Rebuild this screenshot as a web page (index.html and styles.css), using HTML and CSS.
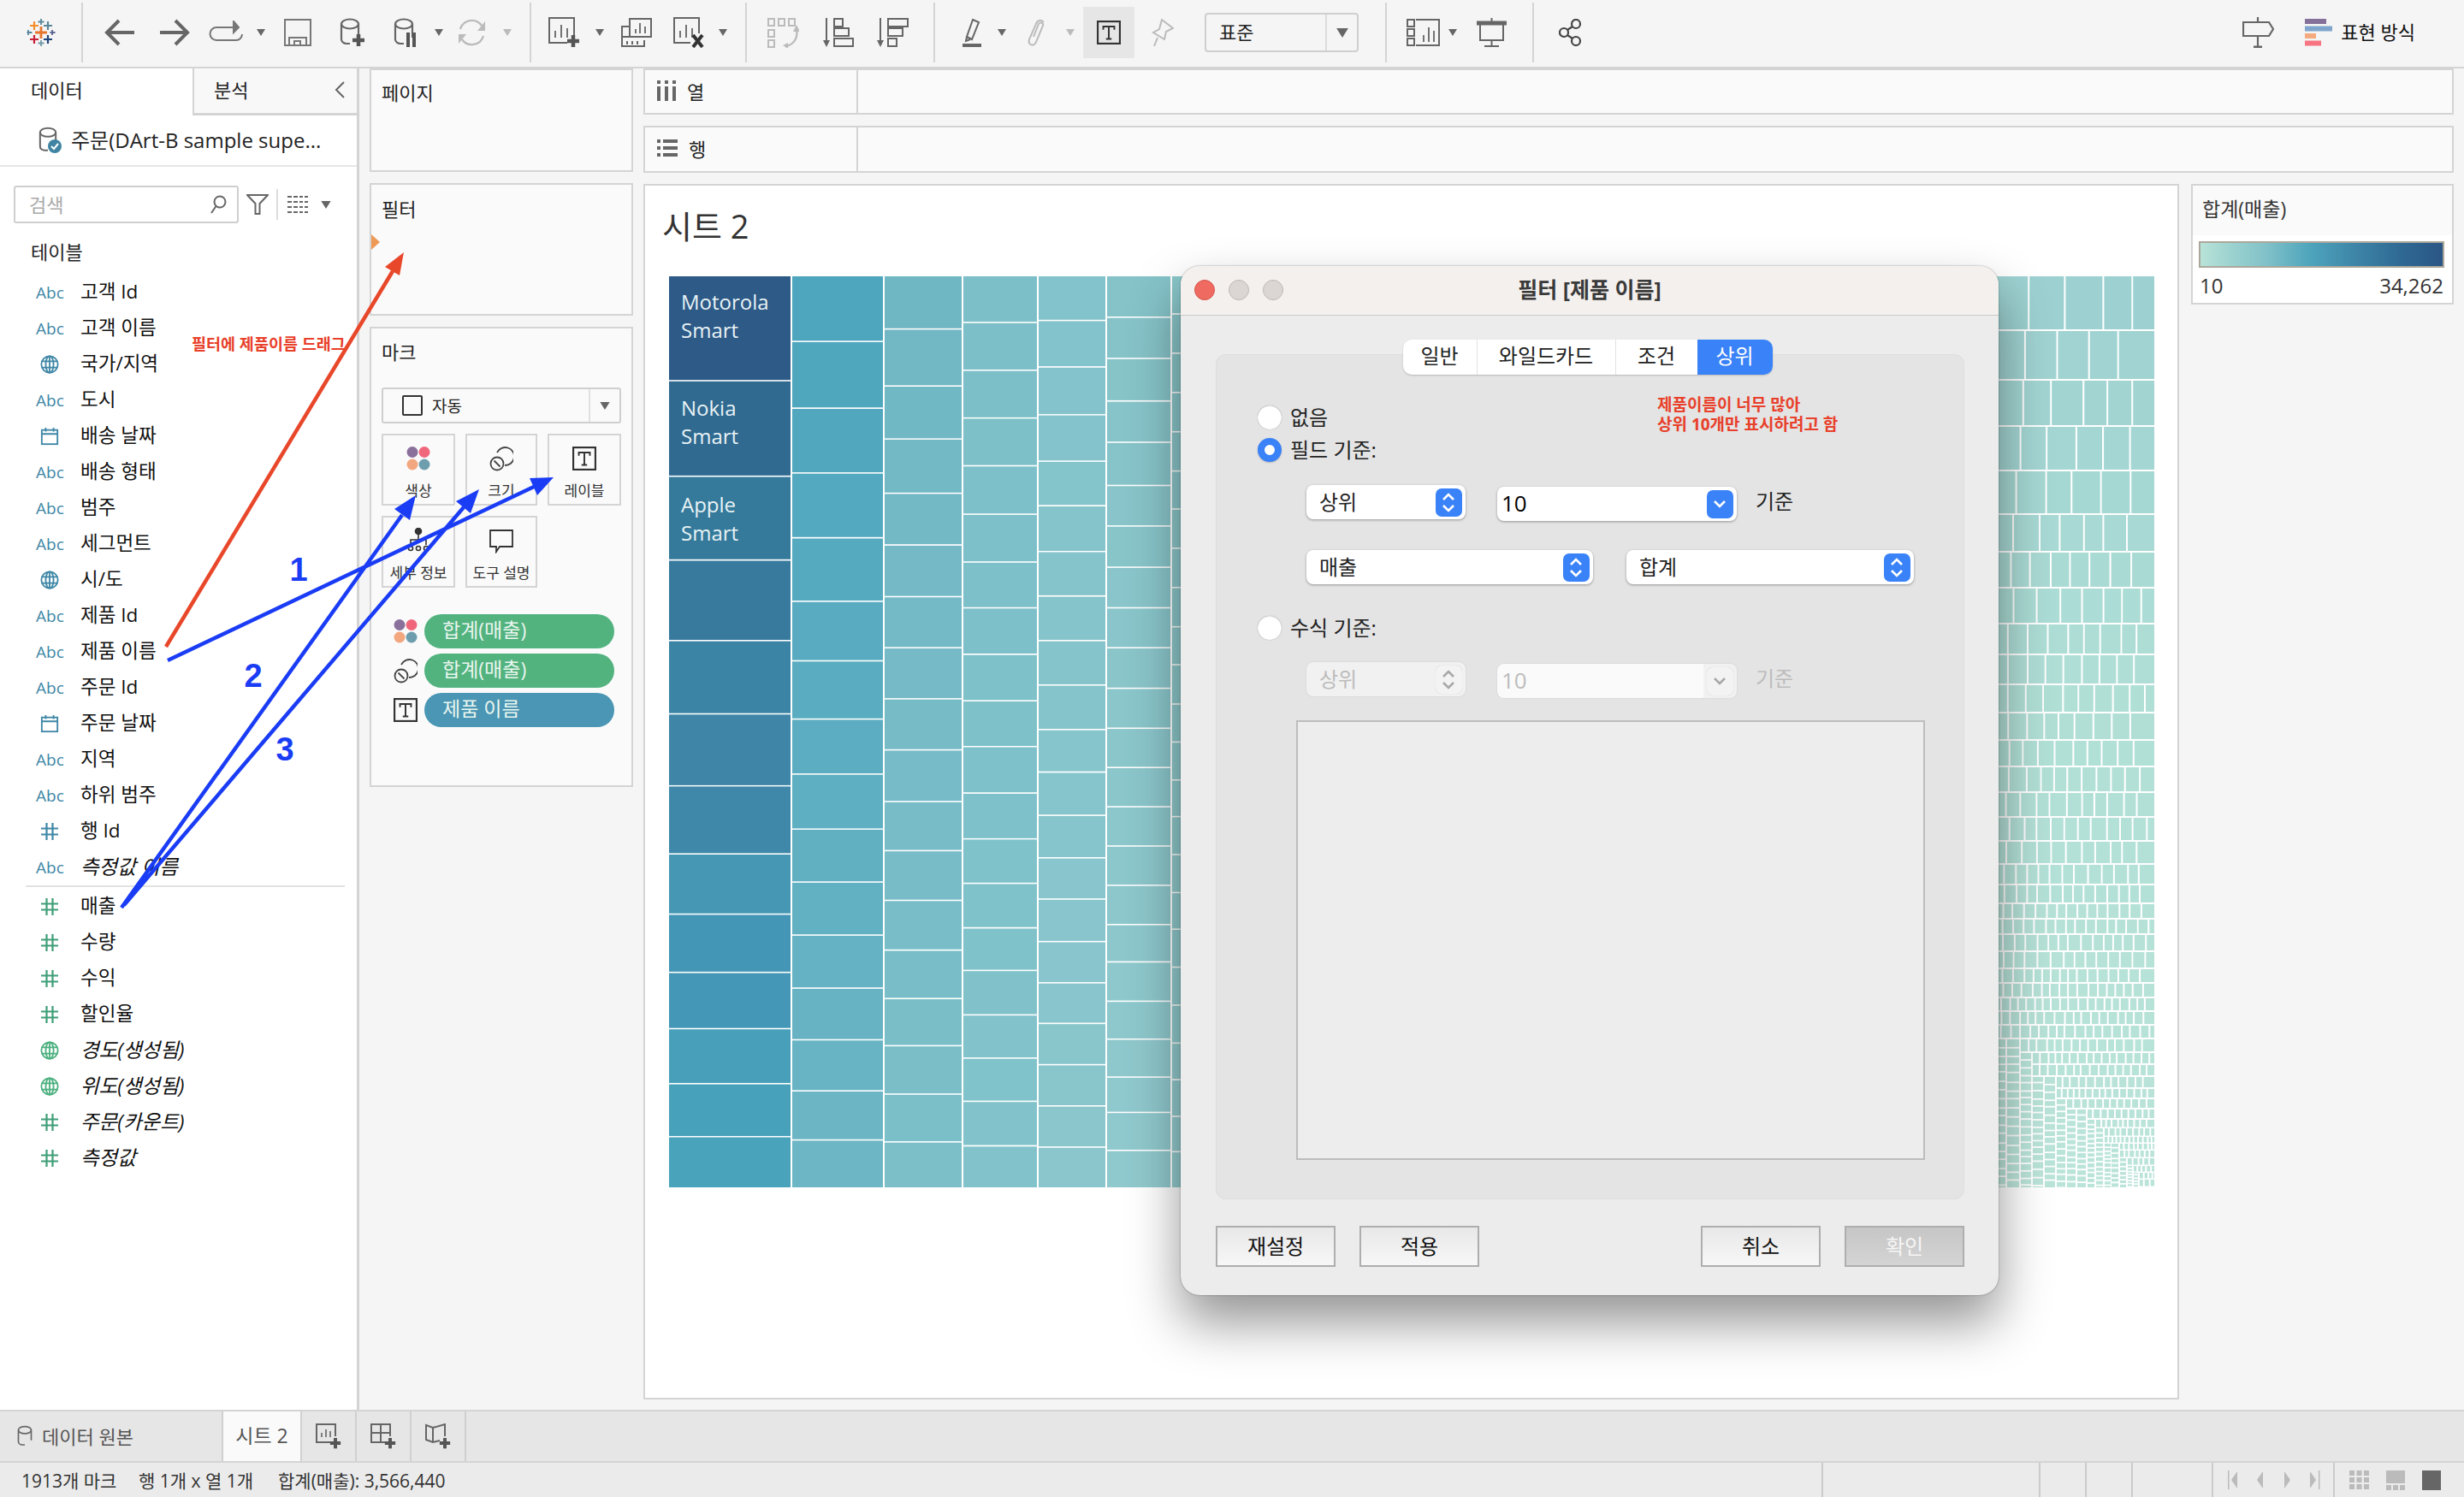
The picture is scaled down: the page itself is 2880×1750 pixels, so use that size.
FILE: index.html
```html
<!DOCTYPE html>
<html lang="ko">
<head>
<meta charset="utf-8">
<title>필터 [제품 이름]</title>
<link rel="stylesheet" href="styles.css">
</head>
<body>
<svg class="sprite" aria-hidden="true">
  <symbol id="s-hash" viewBox="0 0 22 22"><path d="M7.500 1v20M14.500 1v20M1 7.500h20M1 14.500h20" fill="none" stroke="currentColor" stroke-width="2.200"/></symbol>
  <symbol id="s-globe" viewBox="0 0 24 24"><g fill="none" stroke="currentColor" stroke-width="2"><circle cx="12" cy="12" r="10.500"/><ellipse cx="12" cy="12" rx="5" ry="10.500"/><path d="M2 8h20M2 16h20M12 1.500v21"/></g></symbol>
  <symbol id="s-cal" viewBox="0 0 24 24"><g fill="none" stroke="currentColor" stroke-width="2"><rect x="2" y="4" width="20" height="18"/><path d="M2 9h20M7 1v5M17 1v5"/></g></symbol>
  <symbol id="s-dots" viewBox="0 0 28 30"><circle cx="7" cy="7.500" r="6.500" fill="#8a719b"/><circle cx="21" cy="7.500" r="6.500" fill="#f0677b"/><circle cx="7" cy="22" r="6.500" fill="#f2a77f"/><circle cx="21" cy="22" r="6.500" fill="#6e9eae"/></symbol>
  <symbol id="s-size" viewBox="0 0 28 30"><g fill="none" stroke="#444" stroke-width="1.800"><path d="M9 8a10.500 10.500 0 1 1 9 15"/><circle cx="9" cy="21" r="7.500"/><path d="M5.500 17.500l7 7"/></g></symbol>
  <symbol id="s-t" viewBox="0 0 26 26"><rect x="1" y="1" width="24" height="24" fill="none" stroke="#333" stroke-width="2"/><path d="M7 10V6.500h12V10M13 6.500V20M10 20h6" fill="none" stroke="#333" stroke-width="1.800"/></symbol>
  <symbol id="s-caret" viewBox="0 0 10 8"><path d="M0 0h10L5 8z" fill="currentColor"/></symbol>
  <symbol id="s-db" viewBox="0 0 24 32"><g fill="none" stroke="currentColor" stroke-width="2.200"><ellipse cx="12" cy="7" rx="10" ry="5.500"/><path d="M2 7v18c0 3 3 5 6 5h4M22 7v16"/></g></symbol>
  <symbol id="s-plus" viewBox="0 0 16 16"><path d="M8 1v14M1 8h14" stroke="#555" stroke-width="4.500" fill="none"/></symbol>
  <symbol id="s-ud" viewBox="0 0 32 34"><path d="M10 14l6-6 6 6M10 21l6 6 6-6" fill="none" stroke="currentColor" stroke-width="2.600"/></symbol>
  <symbol id="s-down" viewBox="0 0 32 34"><path d="M10 14l6 6 6-6" fill="none" stroke="currentColor" stroke-width="2.600"/></symbol>
</svg>

<div class="app">
  <header class="toolbar">
    <svg class="ml31" width="34" height="34" viewBox="31 21 34 34" fill="none">
      <path d="M48 31v14M41 38h14" stroke="#e8762c" stroke-width="2.800"/>
      <path d="M40 25v10M35 30h10" stroke="#f28e2b" stroke-width="2.200"/>
      <path d="M56 25v10M51 30h10" stroke="#5b879b" stroke-width="2.200"/>
      <path d="M40 41v10M35 46h10" stroke="#c72037" stroke-width="2.200"/>
      <path d="M56 41v10M51 46h10" stroke="#1f447b" stroke-width="2.200"/>
      <path d="M48 22v7M44.500 25.500h7" stroke="#5b879b" stroke-width="1.800"/>
      <path d="M48 47v7M44.500 50.500h7" stroke="#7099a6" stroke-width="1.800"/>
      <path d="M33 35v6M31.500 38h6" stroke="#59879b" stroke-width="1.800"/>
      <path d="M61 35v6M58.500 38h6" stroke="#5b6591" stroke-width="1.800"/>
    </svg>
    <i class="sep ml30"></i>
    <svg class="ml25" width="35" height="32" viewBox="0 0 35 32" fill="none" stroke="#666" stroke-width="4"><path d="M35 16H4M17 2L3 16l14 14"/></svg>
    <svg class="ml30" width="35" height="32" viewBox="0 0 35 32" fill="none" stroke="#666" stroke-width="4"><path d="M0 16h31M18 2l14 14-14 14"/></svg>
    <svg class="ml22" width="40" height="28" viewBox="0 0 40 28" fill="none" stroke="#777" stroke-width="2"><path d="M29 8H9a7.500 7.500 0 0 0 0 15h23a7 7 0 0 0 7-7"/><path d="M29 1l6 7-6 6z" fill="#777"/></svg>
    <svg class="ml16 ink" width="10" height="8"><use href="#s-caret"/></svg>
    <svg class="ml22" width="32" height="32" viewBox="0 0 32 32" fill="none" stroke="#777" stroke-width="2"><rect x="1" y="1" width="30" height="30"/><path d="M6 31V22h20v9M12 31v-5h7v5"/></svg>
    <svg class="ml33 ink" width="30" height="34" viewBox="0 0 30 34"><svg width="24" height="32"><use href="#s-db"/></svg><svg x="14" y="18" width="16" height="16"><use href="#s-plus"/></svg></svg>
    <svg class="ml33 ink" width="27" height="34" viewBox="0 0 27 34"><svg width="24" height="32"><use href="#s-db"/></svg><path d="M15 17h4v17h-4zM22 17h4v17h-4z" fill="#555"/></svg>
    <svg class="ml21 ink" width="10" height="8"><use href="#s-caret"/></svg>
    <svg class="ml17" width="33" height="32" viewBox="0 0 33 32" fill="none" stroke="#bbb" stroke-width="2.400"><path d="M3 12A14 14 0 0 1 28 8M30 20A14 14 0 0 1 5 24"/><path d="M32 3v11h-9zM1 29V18h9z" fill="#bbb" stroke="none"/></svg>
    <svg class="ml20 ink-l" width="10" height="8"><use href="#s-caret"/></svg>
    <i class="sep ml21"></i>
    <svg class="ml20" width="37" height="36" viewBox="0 0 37 36" fill="none" stroke="#666" stroke-width="2"><path d="M22 30H1V1h29v20"/><path d="M8 24v-8M15 24V9M22 24V13" stroke-width="1.800"/><svg x="21" y="20" width="16" height="16"><use href="#s-plus"/></svg></svg>
    <svg class="ml18 ink" width="10" height="8"><use href="#s-caret"/></svg>
    <svg class="ml20" width="36" height="34" viewBox="0 0 36 34" fill="none" stroke="#666" stroke-width="2"><rect x="10" y="1" width="25" height="21"/><path d="M17 18v-5M22 18V6M28 18v-8" stroke-width="1.800"/><path d="M10 10H1v23h26v-7M1 22h26M7 27v4M13 27v4M19 27v4"/></svg>
    <svg class="ml25" width="36" height="36" viewBox="0 0 36 36" fill="none" stroke="#666" stroke-width="2"><path d="M20 30H1V1h29v18"/><path d="M8 24v-8M15 24V9M22 24V13" stroke-width="1.800"/><path d="M23 21l11 14M34 21L23 35" stroke="#333" stroke-width="4"/></svg>
    <svg class="ml17 ink" width="10" height="8"><use href="#s-caret"/></svg>
    <i class="sep ml21"></i>
    <svg class="ml24" width="37" height="36" viewBox="0 0 37 36" fill="none" stroke="#bbb" stroke-width="2"><path d="M1 2h7v8H1zM13 2h7v8h-7zM25 2h7v8h-7zM1 15h7v8H1zM1 27h7v8H1z"/><path d="M34 14c2 10-3 18-12 20" stroke-width="2.400"/><path d="M30 17h8l-4-8zM24 30v7l-6-4z" fill="#bbb" stroke="none"/></svg>
    <svg class="ml28" width="36" height="36" viewBox="0 0 36 36" fill="none" stroke="#666" stroke-width="2"><path d="M4 1v28"/><path d="M0 27h8l-4 8z" fill="#666" stroke="none"/><rect x="13" y="2" width="10" height="9"/><rect x="13" y="13" width="17" height="9"/><rect x="13" y="25" width="22" height="9"/></svg>
    <svg class="ml27" width="37" height="36" viewBox="0 0 37 36" fill="none" stroke="#666" stroke-width="2"><path d="M4 1v28"/><path d="M0 27h8l-4 8z" fill="#666" stroke="none"/><rect x="13" y="2" width="23" height="9"/><rect x="13" y="13" width="17" height="9"/><rect x="13" y="25" width="10" height="9"/></svg>
    <i class="sep ml29"></i>
    <svg class="ml32" width="22" height="34" viewBox="0 0 22 34" fill="none" stroke="#666" stroke-width="2"><path d="M12 2l7 3-8 20-6-3zM5 22l-1 5 5-2"/><path d="M0 30h22v4H0z" fill="#666" stroke="none"/></svg>
    <svg class="ml19 ink" width="10" height="8"><use href="#s-caret"/></svg>
    <svg class="ml24" width="25" height="32" viewBox="0 0 25 32" fill="none" stroke="#bbb" stroke-width="2"><path d="M20 4c-3-4-8-2-9 2L3 24c-2 7 6 9 8 3l8-19c1-3-3-5-5-2L8 21"/></svg>
    <svg class="ml21 ink-l" width="10" height="8"><use href="#s-caret"/></svg>
    <div class="tb-active ml10"><svg width="34" height="28"><use href="#s-t"/></svg></div>
    <svg class="ml20" width="26" height="32" viewBox="0 0 26 32" fill="none" stroke="#bbb" stroke-width="2"><path d="M12 1l13 10-8 4-2 9-13-8 7-4zM7 22L3 32"/></svg>
    <div class="tb-select ml36"><span class="tb-select-t">표준</span><span class="tb-select-c"><svg class="ink" width="14" height="11"><use href="#s-caret"/></svg></span></div>
    <i class="sep ml31"></i>
    <svg class="ml23" width="40" height="32" viewBox="0 0 40 32" fill="none" stroke="#666" stroke-width="2"><rect x="1" y="1" width="8" height="8"/><rect x="1" y="12" width="8" height="8"/><rect x="1" y="23" width="8" height="8"/><path d="M11 1h27v30H11"/><path d="M20 27v-8M26 27V10M32 27V14" stroke-width="1.800"/></svg>
    <svg class="ml9 ink" width="10" height="8"><use href="#s-caret"/></svg>
    <svg class="ml23" width="35" height="34" viewBox="0 0 35 34" fill="none" stroke="#666" stroke-width="2"><path d="M0 6h35" stroke-width="5"/><path d="M17.500 0v4M4 8v18h27V8M17.500 26v7M9 33h17"/></svg>
    <i class="sep ml30"></i>
    <svg class="ml29" width="28" height="32" viewBox="0 0 28 32" fill="none" stroke="#444" stroke-width="2.200"><circle cx="20" cy="6" r="5"/><circle cx="6" cy="16" r="5"/><circle cx="20" cy="26" r="5"/><path d="M16 9l-6 4M10 19l6 4"/></svg>
    <span class="grow"></span>
    <svg width="37" height="36" viewBox="0 0 37 36" fill="none" stroke="#666" stroke-width="2.200"><path d="M1 6h30l5 8-5 8H1zM18 0v6M18 22v13"/><path d="M13 35h10" stroke-width="3"/></svg>
    <svg class="ml36" width="32" height="32" viewBox="0 0 32 32"><rect width="25" height="6" fill="#85709a"/><rect y="8.500" width="32" height="6" fill="#7fa5cc"/><rect y="17" width="13" height="6" fill="#f4aa7e"/><rect y="25.500" width="19" height="6" fill="#f87482"/></svg>
    <span class="show-me">표현 방식</span>
  </header>

  <div class="main">
    <aside class="sidebar">
      <div class="side-tabs">
        <div class="side-tab active">데이터</div>
        <div class="side-tab">분석<svg class="chev" width="12" height="20" viewBox="0 0 12 20" fill="none" stroke="#666" stroke-width="2"><path d="M11 1L2 10l9 9"/></svg></div>
      </div>
      <div class="ds-row">
        <svg class="ds-icon" width="27" height="32" viewBox="0 0 27 32"><svg class="ink" width="22" height="30"><use href="#s-db"/></svg><circle cx="19" cy="23" r="8" fill="#3f85a3"/><path d="M15 23l3 3 5-6" stroke="#fff" stroke-width="2" fill="none"/></svg>
        <span>주문(DArt-B sample supe...</span>
      </div>
      <div class="search-row">
        <div class="search"><span>검색</span><svg width="20" height="22" viewBox="0 0 20 22" fill="none" stroke="#666" stroke-width="2"><circle cx="12" cy="8" r="6.500"/><path d="M7.500 13L2 21"/></svg></div>
        <svg class="funnel" width="26" height="24" viewBox="0 0 26 24" fill="none" stroke="#666" stroke-width="2"><path d="M1 1h24L15.500 11v12h-5V11z"/></svg>
        <i class="vsep"></i>
        <svg class="gridlist" width="24" height="20" viewBox="0 0 24 20" fill="#666"><path d="M0 0h5v2H0zM7 0h5v2H7zM14 0h4v2h-4zM20 0h4v2h-4zM0 6h5v2H0zM7 6h5v2H7zM14 6h4v2h-4zM20 6h4v2h-4zM0 12h5v2H0zM7 12h5v2H7zM14 12h4v2h-4zM20 12h4v2h-4zM0 18h5v2H0zM7 18h5v2H7zM14 18h4v2h-4zM20 18h4v2h-4z"/></svg>
        <svg class="search-caret ink" width="14" height="9"><use href="#s-caret"/></svg>
      </div>
      <div class="side-heading">테이블</div>
      <ul class="fields dims">
        <li><span class="ft">Abc</span>고객 Id</li>
        <li><span class="ft">Abc</span>고객 이름</li>
        <li><svg class="ft"><use href="#s-globe"/></svg>국가/지역</li>
        <li><span class="ft">Abc</span>도시</li>
        <li><svg class="ft"><use href="#s-cal"/></svg>배송 날짜</li>
        <li><span class="ft">Abc</span>배송 형태</li>
        <li><span class="ft">Abc</span>범주</li>
        <li><span class="ft">Abc</span>세그먼트</li>
        <li><svg class="ft"><use href="#s-globe"/></svg>시/도</li>
        <li><span class="ft">Abc</span>제품 Id</li>
        <li><span class="ft">Abc</span>제품 이름</li>
        <li><span class="ft">Abc</span>주문 Id</li>
        <li><svg class="ft"><use href="#s-cal"/></svg>주문 날짜</li>
        <li><span class="ft">Abc</span>지역</li>
        <li><span class="ft">Abc</span>하위 범주</li>
        <li><svg class="ft hash"><use href="#s-hash"/></svg>행 Id</li>
        <li><span class="ft">Abc</span><em>측정값 이름</em></li>
      </ul>
      <hr class="field-sep">
      <ul class="fields meas">
        <li><svg class="ft hash"><use href="#s-hash"/></svg>매출</li>
        <li><svg class="ft hash"><use href="#s-hash"/></svg>수량</li>
        <li><svg class="ft hash"><use href="#s-hash"/></svg>수익</li>
        <li><svg class="ft hash"><use href="#s-hash"/></svg>할인율</li>
        <li><svg class="ft"><use href="#s-globe"/></svg><em>경도(생성됨)</em></li>
        <li><svg class="ft"><use href="#s-globe"/></svg><em>위도(생성됨)</em></li>
        <li><svg class="ft hash"><use href="#s-hash"/></svg><em>주문(카운트)</em></li>
        <li><svg class="ft hash"><use href="#s-hash"/></svg><em>측정값</em></li>
      </ul>
    </aside>

    <section class="cards">
      <div class="card card-pages"><div class="card-title">페이지</div></div>
      <div class="card card-filters"><div class="card-title">필터</div><i class="drop-mark"></i></div>
      <div class="card card-marks">
        <div class="card-title">마크</div>
        <div class="mark-type">
          <i class="mark-square"></i><span class="mark-type-t">자동</span>
          <span class="mark-type-c"><svg class="ink" width="14" height="9"><use href="#s-caret"/></svg></span>
        </div>
        <div class="mark-btns">
          <div class="mark-btn"><svg width="28" height="30"><use href="#s-dots"/></svg><span>색상</span></div>
          <div class="mark-btn"><svg width="28" height="30"><use href="#s-size"/></svg><span>크기</span></div>
          <div class="mark-btn"><svg width="28" height="30"><use href="#s-t"/></svg><span>레이블</span></div>
          <div class="mark-btn"><svg width="28" height="30" viewBox="0 0 28 30" fill="none" stroke="#333" stroke-width="1.600"><circle cx="14" cy="4" r="3.500" fill="#333"/><path d="M14 8v6M5 20v-6h18v6"/><circle cx="5" cy="24" r="2.500"/><circle cx="14" cy="24" r="2.500"/><circle cx="23" cy="24" r="2.500"/></svg><span>세부 정보</span></div>
          <div class="mark-btn"><svg width="28" height="30" viewBox="0 0 28 30" fill="none" stroke="#333" stroke-width="1.800"><path d="M1 3h26v19H12l-4 6v-6H1z"/></svg><span>도구 설명</span></div>
        </div>
        <div class="pill-row"><svg width="28" height="30"><use href="#s-dots"/></svg><span class="pill green">합계(매출)</span></div>
        <div class="pill-row"><svg width="28" height="30"><use href="#s-size"/></svg><span class="pill green">합계(매출)</span></div>
        <div class="pill-row"><svg width="28" height="30"><use href="#s-t"/></svg><span class="pill blue">제품 이름</span></div>
      </div>
    </section>

    <section class="work">
      <div class="shelf">
        <div class="shelf-h"><svg width="22" height="24" viewBox="0 0 22 24" fill="#666"><path d="M0 0h4v4H0zM9 0h4v4H9zM18 0h4v4h-4zM0 7h4v17H0zM9 7h4v17H9zM18 7h4v17h-4z"/></svg>열</div>
      </div>
      <div class="shelf">
        <div class="shelf-h"><svg width="24" height="20" viewBox="0 0 24 20" fill="#666"><path d="M0 0h4v4H0zM7 0h17v4H7zM0 8h4v4H0zM7 8h17v4H7zM0 16h4v4H0zM7 16h17v4H7z"/></svg>행</div>
      </div>
      <div class="view-row">
        <div class="canvas">
          <h1 class="sheet-title">시트 2</h1>
          <div class="treemap" id="treemap">
            <div class="tm-label l1">Motorola<br>Smart</div>
            <div class="tm-label l2">Nokia<br>Smart</div>
            <div class="tm-label l3">Apple<br>Smart</div>
          </div>
        </div>
        <div class="legend">
          <div class="legend-h">합계(매출)</div>
          <div class="legend-bar"></div>
          <div class="legend-nums"><span>10</span><span>34,262</span></div>
        </div>
      </div>
    </section>
  </div>

  <div class="tabbar">
    <div class="tab-src"><svg class="ink-m" width="18" height="25"><use href="#s-db"/></svg>데이터 원본</div>
    <div class="tab-sheet">시트 2</div>
    <div class="tab-new"><svg width="30" height="30" viewBox="0 0 30 30" fill="none" stroke="#666" stroke-width="2"><path d="M17 22H1V1h22v14"/><path d="M7 16v-5M12 16V7M17 16v-7" stroke-width="1.600"/><svg x="16" y="16" width="14" height="14"><use href="#s-plus"/></svg></svg></div>
    <div class="tab-new"><svg width="30" height="30" viewBox="0 0 30 30" fill="none" stroke="#666" stroke-width="2"><path d="M17 22H1V1h22v14M1 11h22M12 1v21"/><svg x="16" y="16" width="14" height="14"><use href="#s-plus"/></svg></svg></div>
    <div class="tab-new"><svg width="30" height="30" viewBox="0 0 30 30" fill="none" stroke="#666" stroke-width="2"><path d="M17 20l-8 2-8-3V2l8 3 14-4v14M9 5v17"/><svg x="16" y="16" width="14" height="14"><use href="#s-plus"/></svg></svg></div>
  </div>
  <footer class="status">
    <div class="st-text"><span>1913개 마크</span><span>행 1개 x 열 1개</span><span>합계(매출): 3,566,440</span></div>
    <div class="st-cell c1"></div><div class="st-cell c2"></div><div class="st-cell c2"></div><div class="st-cell c3"></div>
    <div class="st-cell c4"><svg width="108" height="24" viewBox="0 0 108 24" fill="#bbb"><path d="M0 1h1.500v22H0zM4 12l7-10v20zM34 12l7-10v20zM66 2l7 10-7 10zM96 2l7 10-7 10zM106 1h1.500v22H106z"/></svg></div>
    <div class="st-cell c5">
      <svg width="24" height="23" viewBox="0 0 24 23" fill="#bbb"><path d="M0 0h6v6H0zM8.500 0h6v6h-6zM17 0h6v6h-6zM0 8h6v6H0zM8.500 8h6v6h-6zM17 8h6v6h-6zM0 16h6v6H0zM8.500 16h6v6h-6zM17 16h6v6h-6z"/></svg>
      <svg width="23" height="23" viewBox="0 0 23 23" fill="#bbb"><path d="M0 0h22v15H0zM0 17h6v6H0zM8 17h6v6H8zM16 17h6v6h-6z"/></svg>
      <svg width="22" height="23" viewBox="0 0 22 23" fill="#666"><path d="M0 0h22v23H0z"/></svg>
    </div>
  </footer>

  <div class="note-drag">필터에 제품이름 드래그</div>
  <svg class="arrows" width="2880" height="1750" viewBox="0 0 2880 1750">
    <path d="M194 756L459 317" stroke="#e8472a" stroke-width="4.500" fill="none"/>
    <path d="M472 295L467 322 450 312z" fill="#e8472a"/>
    <path d="M196 772L624 569M142 1061L470 602M145 1058L542 593" stroke="#1a3cf5" stroke-width="4.500" fill="none"/>
    <path d="M647 558L628 579 619 559zM486 579L479 608 461 595zM560 572L550 600 533 586z" fill="#1a3cf5"/>
    <text class="arrow-num" x="349" y="679">1</text>
    <text class="arrow-num" x="296" y="803">2</text>
    <text class="arrow-num" x="333" y="889">3</text>
  </svg>

  <div class="dialog">
    <div class="d-title">
      <div class="lights"><i class="l-red"></i><i></i><i></i></div>
      <span>필터 [제품 이름]</span>
    </div>
    <div class="d-body">
      <div class="seg">
        <span class="s1">일반</span><span class="s2">와일드카드</span><span class="s3">조건</span><span class="s4 on">상위</span>
      </div>
      <div class="panel">
        <div class="note-top">제품이름이 너무 많아<br>상위 10개만 표시하려고 함</div>
        <label class="radio"><i></i>없음</label>
        <label class="radio"><i class="on"></i>필드 기준:</label>
        <div class="frow r1">
          <div class="sel w186"><span>상위</span><b><svg width="32" height="34"><use href="#s-ud"/></svg></b></div>
          <div class="sel combo w280"><span class="num">10</span><b><svg width="32" height="34"><use href="#s-down"/></svg></b></div>
          <span class="by">기준</span>
        </div>
        <div class="frow r2">
          <div class="sel w335"><span>매출</span><b><svg width="32" height="34"><use href="#s-ud"/></svg></b></div>
          <div class="sel w336"><span>합계</span><b><svg width="32" height="34"><use href="#s-ud"/></svg></b></div>
        </div>
        <label class="radio r3"><i></i>수식 기준:</label>
        <div class="frow r4 off">
          <div class="sel w186"><span>상위</span><b><svg width="32" height="34"><use href="#s-ud"/></svg></b></div>
          <div class="sel combo w280"><span class="num">10</span><b><svg width="32" height="34"><use href="#s-down"/></svg></b></div>
          <span class="by">기준</span>
        </div>
        <div class="listbox"></div>
      </div>
      <div class="d-foot">
        <button class="btn">재설정</button>
        <button class="btn">적용</button>
        <button class="btn push">취소</button>
        <button class="btn ok">확인</button>
      </div>
    </div>
  </div>
</div>
<script src="treemap.js"></script>
</body>
</html>
```

FILE: styles.css
```css
* { box-sizing: border-box; }
html, body { margin: 0; padding: 0; }
body {
  width: 2880px; height: 1750px; overflow: hidden;
  font-family: "Open Sans", "Noto Sans CJK KR", sans-serif;
  font-size: 22px; color: #222; background: #f5f5f5;
}
.sprite { position: absolute; width: 0; height: 0; }
.app { position: relative; width: 2880px; height: 1750px; display: flex; flex-direction: column; }
ul { list-style: none; margin: 0; padding: 0; }
svg { display: block; flex: none; }
.ink { color: #666; } .ink-l { color: #bbb; } .ink-m { color: #666; }

/* toolbar */
.toolbar { height: 80px; flex: none; display: flex; align-items: center; padding: 0 57px 2px 0; border-bottom: 2px solid #d4d4d4; background: #f5f5f5; }
.sep { display: block; width: 2px; height: 70px; background: #d4d4d4; flex: none; }
.grow { flex: 1; }
.ml9{margin-left:9px}.ml10{margin-left:10px}.ml16{margin-left:16px}.ml17{margin-left:17px}.ml18{margin-left:18px}.ml19{margin-left:19px}
.ml20{margin-left:20px}.ml21{margin-left:21px}.ml22{margin-left:22px}.ml23{margin-left:23px}.ml24{margin-left:24px}.ml25{margin-left:25px}
.ml27{margin-left:27px}.ml28{margin-left:28px}.ml29{margin-left:29px}.ml30{margin-left:30px}.ml31{margin-left:31px}.ml32{margin-left:32px}
.ml33{margin-left:33px}.ml36{margin-left:36px}
.tb-active { width: 60px; height: 60px; background: #e6e6e6; display: flex; align-items: center; justify-content: center; flex: none; }
.tb-select { width: 180px; height: 46px; flex: none; display: flex; border: 2px solid #cfcfcf; border-radius: 4px; }
.tb-select-t { flex: 1; padding-left: 15px; line-height: 40px; font-size: 22px; }
.tb-select-c { width: 37px; border-left: 2px solid #dcdcdc; display: flex; align-items: center; justify-content: center; }
.show-me { margin-left: 10px; font-size: 22px; color: #111; white-space: nowrap; line-height: 28px; padding-bottom: 3px; }

/* main layout */
.main { flex: 1; min-height: 0; display: flex; background: #f5f5f5; }
.sidebar { width: 420px; flex: none; background: #fff; border-right: 3px solid #d4d4d4; }
.side-tabs { display: flex; height: 55px; }
.side-tab { line-height: 50px; padding-left: 36px; width: 225px; }
.side-tab + .side-tab { flex: 1; position: relative; padding-left: 23px; background: #f8f8f8; border-left: 2px solid #d4d4d4; border-bottom: 3px solid #d4d4d4; }
.chev { position: absolute; right: 14px; top: 15px; }
.ds-row { height: 60px; display: flex; align-items: center; padding-left: 45px; gap: 11px; border-bottom: 2px solid #e6e6e6; }
.ds-row span { font-size: 24px; margin-top: -3px; white-space: nowrap; }
.search-row { display: flex; align-items: center; height: 44px; margin-top: 22px; padding-left: 16px; }
.search { width: 263px; height: 44px; border: 2px solid #cfcfcf; border-radius: 3px; display: flex; align-items: center; justify-content: space-between; padding: 0 12px 0 16px; color: #aaa; }
.search span { margin-top: -3px; }
.funnel { margin-left: 9px; }
.vsep { width: 2px; height: 36px; background: #ddd; margin-left: 9px; }
.gridlist { margin-left: 11px; }
.search-caret { margin-left: 14px; }
.side-heading { height: 42px; margin-top: 13px; margin-bottom: 4px; line-height: 40px; padding-left: 36px; }
.fields li { height: 42px; display: flex; align-items: center; padding: 0 0 3px 42px; gap: 20px; color: #111; white-space: nowrap; font-size: 22.500px; }
.fields em { font-style: italic; font-size: 23.500px; }
.ft { width: 32px; height: 22px; flex: none; font-size: 19px; line-height: 22px; text-align: center; margin-top: 4px; }
.dims .ft { color: #3f87a6; }
.meas .ft { color: #4cb07f; }
.meas .ft.hash { color: #3f9e77; }
.dims .ft.hash { color: #3f87a6; }
.field-sep { margin: 1px 14px 1px 30px; border: 0; height: 2px; background: #e2e2e2; }

/* cards */
.cards { width: 320px; flex: none; padding-left: 12px; display: flex; flex-direction: column; gap: 13px; }
.card { width: 308px; background: #fafafa; border: 2px solid #d4d4d4; padding: 12px; position: relative; }
.card-title { line-height: 32px; }
.card-pages { height: 121px; padding-top: 10px; }
.card-filters { height: 155px; padding-top: 12px; }
.card-marks { height: 538px; padding-top: 11px; }
.drop-mark { position: absolute; left: 0; top: 58px; width: 0; height: 0; border-left: 10px solid #ee9a55; border-top: 9px solid transparent; border-bottom: 9px solid transparent; }
.mark-type { height: 42px; margin-top: 26px; width: 280px; display: flex; align-items: center; border: 2px solid #cfcfcf; border-radius: 3px; padding-left: 22px; font-size: 19px; }
.mark-square { width: 24px; height: 24px; border: 2px solid #333; border-radius: 2px; }
.mark-type-t { flex: 1; margin-left: 11px; }
.mark-type-c { width: 36px; height: 100%; border-left: 2px solid #e0e0e0; display: flex; align-items: center; justify-content: center; }
.mark-btns { display: grid; grid-template-columns: 86px 84px 86px; gap: 12px; margin-top: 12px; width: 280px; margin-bottom: 31px; }
.mark-btn { height: 84px; border: 2px solid #d4d4d4; display: flex; flex-direction: column; align-items: center; padding-top: 12px; font-size: 17px; color: #333; }
.mark-btn span { margin-top: 11px; line-height: 24px; white-space: nowrap; }
.pill-row { display: flex; align-items: center; gap: 8px; height: 40px; margin: 0 0 6px 14px; }
.pill { width: 222px; height: 40px; border-radius: 20px; color: #eaf6ef; font-size: 23px; line-height: 36px; padding-left: 21px; }
.green { background: #52b37f; }
.blue { background: #4a96b4; }

/* work area */
.work { width: 2116px; margin-left: 12px; display: flex; flex-direction: column; gap: 13px; }
.shelf { flex: none; background: #fafafa; border: 2px solid #d4d4d4; height: 54px; display: flex; }
.shelf + .shelf { height: 55px; }
.shelf-h { width: 249px; height: 100%; border-right: 2px solid #d4d4d4; display: flex; align-items: center; padding: 0 0 3px 14px; gap: 13px; }
.view-row { flex: 1; min-height: 0; display: flex; align-items: flex-start; gap: 14px; }
.canvas { width: 1795px; height: 1421px; background: #fff; border: 2px solid #d4d4d4; padding: 0 0 0 28px; position: relative; }
.sheet-title { margin: 0 0 0 -8px; font-size: 38px; font-weight: 400; line-height: 50px; padding-top: 22px; height: 106px; color: #333; }
.treemap { position: relative; width: 1738px; height: 1065px; }
.treemap svg { position: absolute; left: 0; top: 0; }
.tm-label { position: absolute; left: 14px; font-size: 24px; font-weight: 400; line-height: 33px; color: #e8f2f5; z-index: 1; }
.l1 { top: 13px; } .l2 { top: 137px; } .l3 { top: 250px; }
.legend { width: 307px; height: 141px; background: #fff; border: 2px solid #d4d4d4; }
.legend-h { height: 58px; background: #fafafa; line-height: 55px; padding-left: 11px; font-size: 23px; color: #333; }
.legend-bar { margin: 7px 9px 0 7px; height: 31px; border: 2px solid #aca79b; background: linear-gradient(90deg, #b9e3d8 0%, #9dd3d0 12%, #7fc0c8 28%, #4ea5bc 45%, #3f88aa 62%, #2f6a94 82%, #2b5685 100%); }
.legend-nums { display: flex; justify-content: space-between; padding: 3px 10px 0 8px; font-size: 24px; line-height: 36px; color: #333; }

/* bottom */
.tabbar { height: 62px; flex: none; display: flex; background: #e6e6e6; border-top: 2px solid #d4d4d4; border-bottom: 2px solid #d4d4d4; }
.tab-src { width: 261px; display: flex; align-items: center; gap: 11px; padding: 0 0 2px 20px; color: #555; border-right: 2px solid #d0d0d0; white-space: nowrap; }
.tab-sheet { width: 92px; line-height: 56px; text-align: center; background: #fafafa; color: #555; border-right: 2px solid #d0d0d0; font-size: 23px; }
.tab-new { width: 64px; display: flex; align-items: center; justify-content: center; border-right: 2px solid #d0d0d0; }
.status { height: 40px; flex: none; display: flex; background: #ebebeb; font-size: 21px; color: #333; }
.st-text { width: 2129px; display: flex; align-items: center; padding-left: 25px; white-space: nowrap; }
.st-text span { width: 137px; }
.st-text span + span { width: 163px; }
.st-text span + span + span { width: auto; }
.st-cell { border-left: 2px solid #cbcbcb; }
.c1 { width: 254px; } .c2 { width: 54px; } .c3 { width: 94px; }
.c4 { width: 142px; display: flex; align-items: center; padding-left: 17px; }
.c5 { flex: 1; display: flex; align-items: center; gap: 19px; padding-left: 17px; }

/* annotations */
.note-drag { position: absolute; left: 224px; top: 390px; font-size: 18.500px; font-weight: 700; line-height: 24px; color: #e8402a; white-space: nowrap; }
.arrows { position: absolute; left: 0; top: 0; pointer-events: none; }
.arrow-num { font-family: "Liberation Sans", sans-serif; font-weight: 700; font-size: 38px; fill: #1a3cf5; text-anchor: middle; }

/* dialog */
.dialog { position: absolute; left: 1380px; top: 311px; width: 956px; height: 1203px; display: flex; flex-direction: column; background: #ececec; border-radius: 22px; box-shadow: 0 32px 60px rgba(0,0,0,.42), 0 0 2px rgba(0,0,0,.45); overflow: hidden; font-size: 24px; }
.d-title { height: 58px; flex: none; position: relative; background: #f4f0ed; border-bottom: 1px solid #c9c9c9; text-align: center; line-height: 54px; color: #3a3a3a; font-weight: 700; font-size: 25px; }
.lights { position: absolute; left: 16px; top: 16px; display: flex; gap: 16px; }
.lights i { width: 24px; height: 24px; border-radius: 50%; background: #dbd5d3; border: 1px solid #bdb8b6; }
.lights .l-red { background: #ef6a60; border-color: #d5554c; }
.d-body { flex: 1; min-height: 0; display: flex; flex-direction: column; padding: 28px 40px 33px 41px; }
.seg { display: flex; align-self: center; height: 41px; margin-left: -6px; margin-bottom: -24px; position: relative; z-index: 1; background: #fff; border-radius: 10px; box-shadow: 0 1px 2px rgba(0,0,0,.2); overflow: hidden; line-height: 37px; text-align: center; color: #222; }
.seg span + span { border-left: 1px solid #e2e2e2; }
.s1 { width: 86px; } .s2 { width: 162px; } .s3 { width: 96px; } .s4 { width: 88px; }
.seg .on { background: #3a82f7; color: #fff; border-left: 0; }
.panel { height: 988px; flex: none; position: relative; background: #e4e4e4; border-radius: 12px; box-shadow: inset 0 0 0 1px #dedede; padding: 55px 0 0 49px; }
.note-top { position: absolute; left: 516px; top: 48px; font-size: 19px; font-weight: 700; line-height: 23px; color: #e8402a; white-space: nowrap; }
.radio { display: flex; align-items: center; gap: 10px; height: 38px; color: #222; padding-bottom: 3px; }
.radio i { width: 28px; height: 28px; border-radius: 50%; background: #fff; box-shadow: 0 0 1px rgba(0,0,0,.45), inset 0 1px 1px rgba(0,0,0,.1); flex: none; margin-top: 3px; }
.radio i.on { background: #fff; border: 8px solid #3a82f7; box-shadow: 0 1px 2px rgba(0,0,0,.2); }
.frow { display: flex; align-items: flex-start; gap: 37px; margin-left: 57px; height: 42px; }
.r1 { margin-top: 22px; }
.r2 { margin-top: 34px; gap: 39px; height: 40px; }
.r3 { margin-top: 32px; }
.r4 { margin-top: 21px; }
.sel { height: 40px; background: #fff; border-radius: 8px; box-shadow: 0 1px 3px rgba(0,0,0,.35); display: flex; align-items: center; justify-content: space-between; padding: 0 4px 0 15px; color: #222; flex: none; }
.sel > span { margin-top: -3px; }
.sel b { width: 31px; height: 33px; border-radius: 7px; background: #3a82f7; color: #fff; display: flex; align-items: center; justify-content: center; }
.sel b svg { margin-left: -1px; }
.combo { margin-top: 2px; padding-left: 5px; }
.num { font-size: 26px; color: #000; }
.by { margin-left: -15px; line-height: 38px; }
.w186 { width: 186px; } .w280 { width: 280px; } .w335 { width: 335px; } .w336 { width: 336px; }
.off .sel { background: #f1f1f1; box-shadow: 0 0 2px rgba(0,0,0,.12); color: #bcbcbc; }
.off .num { color: #bcbcbc; }
.off .combo { background: linear-gradient(90deg, #fafafa 0 86%, #f1f1f1 86%); }
.off .sel b { background: #f3f3f3; color: #a8a8a8; box-shadow: 0 0 1px rgba(0,0,0,.2); }
.off .by { color: #bcbcbc; }
.listbox { width: 735px; height: 514px; margin: 26px 0 0 45px; background: #ededed; border: 2px solid #bdbdbd; }
.d-foot { display: flex; gap: 28px; margin-top: 31px; }
.btn { width: 140px; height: 48px; padding: 0 0 3px; border: 2px solid #aeaeae; background: linear-gradient(#e8e8e8, #f7f7f7); font: inherit; color: #111; }
.push { margin-left: auto; }
.ok { background: linear-gradient(#c6c6c6, #d4d4d4); color: #f6f6f6; }
```

FILE: treemap.js
```js
(function () {
  var NS = "http://www.w3.org/2000/svg";
  var ox = 782, oy = 322, right = 2520, bottom = 1387;
  var svg = document.createElementNS(NS, "svg");
  svg.setAttribute("width", right - ox);
  svg.setAttribute("height", bottom - oy);
  svg.setAttribute("viewBox", ox + " " + oy + " " + (right - ox) + " " + (bottom - oy));
  var parts = [];

  function hex(c) { return [parseInt(c.substr(1, 2), 16), parseInt(c.substr(3, 2), 16), parseInt(c.substr(5, 2), 16)]; }
  function mix(a, b, t) {
    var x = hex(a), y = hex(b), r = [];
    for (var i = 0; i < 3; i++) r.push(Math.round(x[i] + (y[i] - x[i]) * t));
    return "rgb(" + r.join(",") + ")";
  }
  function rect(x, y, w, h, f) {
    if (w <= 0 || h <= 0) return;
    parts.push('<rect x="' + x.toFixed(1) + '" y="' + y.toFixed(1) + '" width="' + w.toFixed(1) + '" height="' + h.toFixed(1) + '" fill="' + f + '"/>');
  }

  // Left strips: boundaries measured on the reference (in 1.307x crop units).
  var col1Colors = ["#2d5a87", "#306a90", "#357a9b", "#387a9d", "#3c84a6", "#3e85a7", "#4088a9", "#4597b4", "#4396b5", "#4497b6", "#479fb9", "#48a1ba", "#49a4bb"];
  var cols = [
    { x0: 782, x1: 924, b: [159,320,466,594,717,829,939,1043,1135,1224,1310,1394,1475,1552], colors: col1Colors },
    { x0: 926, x1: 1032, b: [159,260,362,461,560,657,748,837,921,1005,1086,1167,1248,1327,1405,1480,1552], c0: "#4da6bd", c1: "#6db6c5" },
    { x0: 1034, x1: 1124, b: [159,241,328,409,492,571,650,728,806,884,963,1038,1114,1190,1264,1336,1410,1483,1552], c0: "#70b7c4", c1: "#7cbfc9" },
    { x0: 1126, x1: 1212, b: [159,231,304,377,450,524,597,667,738,809,879,950,1020,1088,1156,1221,1289,1355,1421,1489,1552], c0: "#7cbfc8", c1: "#82c3cb" },
    { x0: 1214, x1: 1292, b: [159,228,299,372,443,511,581,649,717,785,853,918,984,1049,1112,1177,1240,1302,1365,1428,1491,1552], c0: "#83c3cb", c1: "#8ac6cc" },
    { x0: 1294, x1: 1368, b: [159,223,286,351,414,480,542,605,667,728,790,851,911,971,1031,1091,1151,1208,1268,1326,1384,1438,1496,1552], c0: "#85c3c8", c1: "#90c9cd" },
    { x0: 1370, x1: 1382, b: [159,218,278,338,398,458,516,576,636,696,754,814,872,930,986,1044,1102,1158,1216,1274,1332,1388,1444,1498,1552], c0: "#8ac7ca", c1: "#94cdcf" }
  ];
  cols.forEach(function (c) {
    for (var i = 0; i < c.b.length - 1; i++) {
      var y0 = c.b[i] / 1.307 + 200, y1 = c.b[i + 1] / 1.307 + 200;
      if (i === 0) y0 = oy;
      var last = i === c.b.length - 2;
      var f = c.colors ? c.colors[i] : mix(c.c0, c.c1, i / (c.b.length - 2));
      rect(c.x0, y0, c.x1 - c.x0, y1 - y0 - (last ? 0 : 1.6), f);
    }
  });

  // Right block: the long tail of small marks.
  var seed = 17;
  function rnd() { seed = (seed * 1103515245 + 12345) & 0x7fffffff; return seed / 0x7fffffff; }
  function tail(y) {
    var t = (y - oy) / (bottom - oy);
    return t < 0.45 ? mix("#9dd1d1", "#b0dfd6", t / 0.45) : mix("#b0dfd6", "#bbe4d9", (t - 0.45) / 0.55);
  }
  var tops = [322,386,444,498,550,601,645,687,729,765,800,833,865,896,926,955,983,1010,1034,1056,1074,1092,1112,1132,1149,1166,1182,1198,1214,1230,1244,1258,1272,1284,1296,1308,1318,1328,1336,1344,1353,1362,1370,1378,1387];
  var stairs = [
    [2330,2344,1214],[2346,2360,1214],[2362,2374,1230],[2376,2388,1258],[2390,2402,1258],[2404,2414,1284],
    [2416,2426,1296],[2428,2438,1296],[2440,2448,1308],[2450,2458,1318],[2460,2467,1336],[2468,2476,1336],
    [2478,2485,1353],[2487,2492,1362],[2494,2499,1370]
  ];
  stairs.forEach(function (s) {
    var y = s[2], w = s[1] - s[0];
    var step = Math.max(w * 0.72, 3.6);
    while (y < bottom - 1) {
      var h = step * (0.85 + rnd() * 0.3);
      var he = Math.min(h - 1.8, bottom - y);
      rect(s[0], y, w, he, tail(y));
      y += h;
    }
  });
  for (var r = 0; r < tops.length - 1; r++) {
    var y = tops[r], h = tops[r + 1] - y, gapY = h > 10 ? 2 : 1.5;
    var left = 2330;
    stairs.forEach(function (s) { if (s[2] <= y + 1 && s[1] + 2 > left) left = s[1] + 2; });
    var x = left;
    var base = h * (h > 20 ? 0.6 : 0.66);
    while (x < right - 0.5) {
      var w = base * (0.82 + rnd() * 0.36);
      if (right - (x + w) < base * 0.55) w = right - x;
      rect(x, y, Math.min(w - 2, right - x), h - gapY, tail(y));
      x += w;
    }
  }

  svg.innerHTML = parts.join("");
  document.getElementById("treemap").appendChild(svg);
})();
```
